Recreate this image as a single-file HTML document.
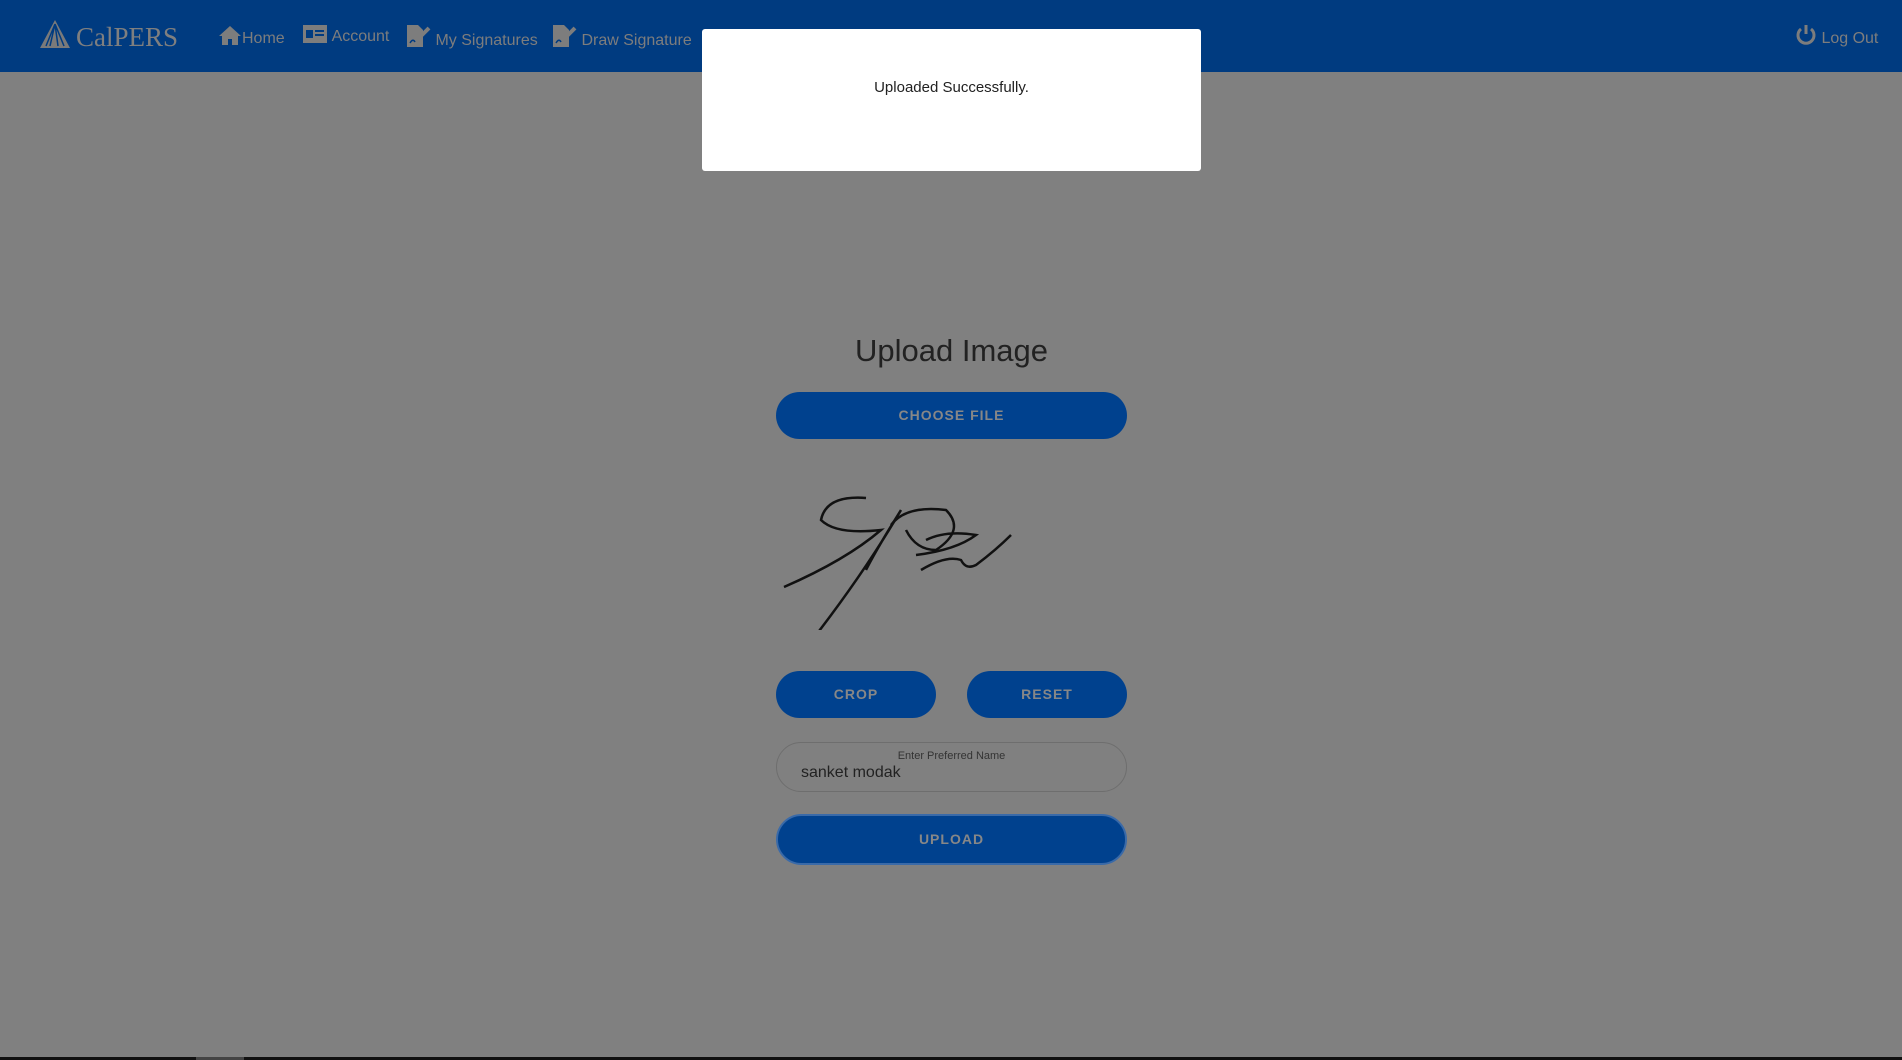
<!DOCTYPE html>
<html><head><style>
*{margin:0;padding:0;box-sizing:border-box}
body{width:1902px;height:1060px;background:#808080;font-family:"Liberation Sans",sans-serif;position:relative;overflow:hidden}
.hdr{position:absolute;left:0;top:0;width:1902px;height:72px;background:#003b80}
.nav{position:absolute;top:24px;color:#7d7d7d;font-size:16px;line-height:26px;white-space:nowrap}
.logo{position:absolute;left:38px;top:18px;color:#7f7f7f;font-family:"Liberation Serif",serif;font-size:27px}
.btn{position:absolute;background:#00418e;border-radius:24px;color:#878787;font-weight:bold;font-size:14px;letter-spacing:1px;text-align:center}
.modal{position:absolute;left:702px;top:29px;width:499px;height:142px;background:#fff;border-radius:3px;text-align:center;font-size:15px;color:#222;padding-top:50px}
</style></head><body>
<div class="hdr">
 <div class="logo"><svg width="34" height="32" viewBox="0 0 34 32" style="vertical-align:-4px"><path d="M17 2 L2 30 H32 Z" fill="#7a7a7a"/><path d="M17 6 L8 28 M17 6 L12 28 M17 6 L20 28 M17 6 L26 28" stroke="#003b80" stroke-width="1.5"/></svg><span style="margin-left:4px">CalPERS</span></div>
 <div class="nav" style="left:218px"><svg width="24" height="22" viewBox="0 0 24 22" style="vertical-align:-3px"><path d="M12 2 L1 12 H4 V21 H10 V15 H14 V21 H20 V12 H23 Z" fill="#7d7d7d"/></svg>Home</div>
 <div class="nav" style="left:302px"><svg width="26" height="20" viewBox="0 0 26 20" style="vertical-align:-3px"><rect x="1" y="1" width="24" height="18" fill="#7d7d7d"/><rect x="4" y="6" width="7" height="8" fill="#003b80"/><rect x="13" y="6" width="9" height="2" fill="#003b80"/><rect x="13" y="10" width="9" height="2" fill="#003b80"/></svg> Account</div>
 <div class="nav" style="left:405px"><svg width="26" height="24" viewBox="0 0 26 24" style="vertical-align:-3px"><path d="M2 1 H13 L18 6 V23 H2 Z" fill="#7d7d7d"/><path d="M12 16 L24 4" stroke="#7d7d7d" stroke-width="4"/><path d="M5 19 Q8 14 10 18" stroke="#003b80" stroke-width="1.5" fill="none"/></svg> My Signatures</div>
 <div class="nav" style="left:551px"><svg width="26" height="24" viewBox="0 0 26 24" style="vertical-align:-3px"><path d="M2 1 H13 L18 6 V23 H2 Z" fill="#7d7d7d"/><path d="M12 16 L24 4" stroke="#7d7d7d" stroke-width="4"/><path d="M5 19 Q8 14 10 18" stroke="#003b80" stroke-width="1.5" fill="none"/></svg> Draw Signature</div>
 <div class="nav" style="left:1795px"><svg width="22" height="22" viewBox="0 0 22 22" style="vertical-align:-3px"><path d="M6 5 A8 8 0 1 0 16 5" stroke="#7d7d7d" stroke-width="3" fill="none"/><path d="M11 1 V10" stroke="#7d7d7d" stroke-width="3"/></svg> Log Out</div>
</div>
<div class="modal">Uploaded Successfully.</div>
<div style="position:absolute;left:776px;width:351px;top:333px;text-align:center;font-size:31px;color:#222">Upload Image</div>
<div class="btn" style="left:776px;top:392px;width:351px;height:47px;line-height:47px">CHOOSE FILE</div>
<svg style="position:absolute;left:776px;top:490px" width="240" height="140" viewBox="0 0 240 140">
<g stroke="#111" stroke-width="2.5" fill="none">
<path d="M8 97 Q70 70 105 40 Q60 45 45 30 Q50 5 90 8"/>
<path d="M40 145 Q90 80 125 20 Q100 60 90 80"/>
<path d="M115 35 Q130 15 170 20 Q190 40 160 60 Q140 60 130 40"/>
<path d="M150 50 Q170 40 200 45 Q180 60 140 65"/>
<path d="M145 80 Q170 65 185 70 Q190 80 200 75 Q220 60 235 45"/>
</g></svg>
<div class="btn" style="left:776px;top:671px;width:160px;height:47px;line-height:47px">CROP</div>
<div class="btn" style="left:967px;top:671px;width:160px;height:47px;line-height:47px">RESET</div>
<div style="position:absolute;left:776px;top:742px;width:351px;height:50px;border:1px solid #6e6e6e;border-radius:25px">
 <div style="text-align:center;font-size:11px;color:#333;margin-top:7px">Enter Preferred Name</div>
 <div style="font-size:16px;color:#222;margin-left:24px;margin-top:2px">sanket modak</div>
</div>
<div class="btn" style="left:776px;top:814px;width:351px;height:51px;line-height:47px;border:2px solid #3a6aa8;border-radius:26px">UPLOAD</div>
<div style="position:absolute;left:0;top:1057px;width:1902px;height:3px;background:#111"></div>
<div style="position:absolute;left:196px;top:1057px;width:48px;height:3px;background:#444"></div>
</body></html>
